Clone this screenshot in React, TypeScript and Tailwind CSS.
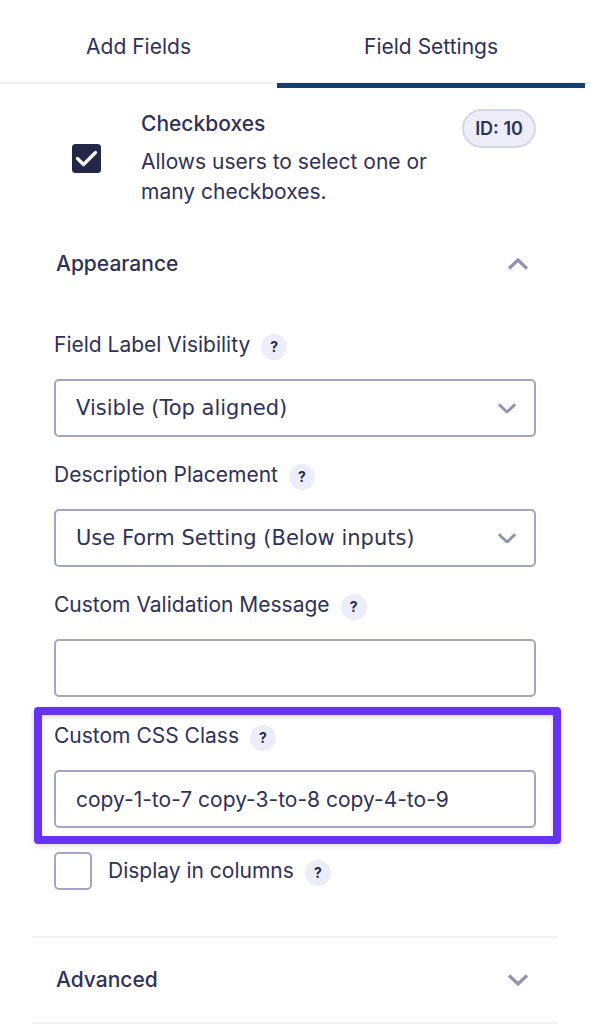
import type { ReactNode } from "react";

const HelpTip = ({ topic }: { topic: string }) => {
  return (
    <button
      type="button"
      aria-label={`Help: ${topic}`}
      className="mt-1 flex size-[26px] shrink-0 items-center justify-center rounded-full bg-[#ecedf8] text-sm font-bold text-[#242748]"
    >
      ?
    </button>
  );
};

const Chevron = ({ up = false, small = false }: { up?: boolean; small?: boolean }) => {
  return (
    <svg
      viewBox="0 0 20 12"
      className={`shrink-0 ${small ? "w-[18px]" : "w-5"} ${up ? "rotate-180" : ""}`}
      fill="none"
      stroke="#9092b2"
      strokeWidth="3.2"
      aria-hidden="true"
    >
      <path d="M1 1.5 L10 10 L19 1.5" />
    </svg>
  );
};

const Field = ({ id, label, children }: { id: string; label: string; children: ReactNode }) => {
  return (
    <div>
      <div className="mb-5 flex h-7 items-center gap-[11px]">
        <label htmlFor={id}>{label}</label>
        <HelpTip topic={label} />
      </div>
      {children}
    </div>
  );
};

const SelectField = ({ id, label, options }: { id: string; label: string; options: string[] }) => {
  return (
    <Field id={id} label={label}>
      <div className="grid items-center">
        <select
          id={id}
          className="col-start-1 row-start-1 h-[58px] w-full appearance-none rounded-[5px] border-2 border-[#a3a5c3] bg-white pr-12 pl-5 font-['DejaVu_Sans',sans-serif]"
        >
          {options.map((option) => (
            <option key={option}>{option}</option>
          ))}
        </select>
        <div className="pointer-events-none col-start-1 row-start-1 mr-5 justify-self-end">
          <Chevron small />
        </div>
      </div>
    </Field>
  );
};

const TextField = ({ id, label, value = "" }: { id: string; label: string; value?: string }) => {
  return (
    <Field id={id} label={label}>
      <input
        id={id}
        type="text"
        defaultValue={value}
        className="block h-[58px] w-full rounded-[5px] border-2 border-[#a3a5c3] bg-white px-5"
      />
    </Field>
  );
};

const SectionHeader = ({ title, open = false }: { title: string; open?: boolean }) => {
  return (
    <h2>
      <button
        type="button"
        aria-expanded={open}
        className="flex h-[84px] w-full items-center justify-between pr-[30px] pl-6 font-medium"
      >
        {title}
        <Chevron up={open} />
      </button>
    </h2>
  );
};

export default function App() {
  return (
    <main className="bg-white font-['Inter',sans-serif] text-[21px] leading-[30px] text-[#2f3158]">
      <div
        role="tablist"
        className="flex bg-[linear-gradient(#f1f1f6,#f1f1f6)] bg-[length:100%_2px] bg-[position:0_82px] bg-no-repeat pr-1.5"
      >
        <button
          type="button"
          role="tab"
          aria-selected="false"
          className="h-[88px] flex-[9] border-b-[5px] border-transparent pt-4 pb-1.5"
        >
          Add Fields
        </button>
        <button
          type="button"
          role="tab"
          aria-selected="true"
          className="h-[88px] flex-[10] border-b-[5px] border-[#113f70] pt-4 pb-1.5"
        >
          Field Settings
        </button>
      </div>

      <div className="pr-[33px] pl-8">
        <div className="flex items-start pt-[21px] pr-[22px] pl-10">
          <svg viewBox="0 0 29 29" className="mt-[35px] mr-10 size-[29px] shrink-0" aria-hidden="true">
            <rect width="29" height="29" rx="3.5" fill="#242748" />
            <path
              d="M5.5 14.5 L11.5 20.5 L23.5 8.5"
              fill="none"
              stroke="#fff"
              strokeWidth="3.2"
              strokeLinecap="round"
              strokeLinejoin="round"
            />
          </svg>
          <div className="flex-1">
            <h1 className="mb-2 font-medium">Checkboxes</h1>
            <p className="max-w-[310px]">Allows users to select one or many checkboxes.</p>
          </div>
          <span className="-ml-10 flex h-[39px] w-[74px] shrink-0 items-center justify-center rounded-full border-2 border-[#d5d7e9] bg-[#ecedf8] text-lg font-semibold">
            ID: 10
          </span>
        </div>

        <section className="pt-[15px]">
          <SectionHeader title="Appearance" open />
          <div className="flex flex-col gap-6 px-[22px] pt-[25px]">
            <SelectField
              id="label-visibility"
              label="Field Label Visibility"
              options={["Visible (Top aligned)", "Hidden"]}
            />
            <SelectField
              id="description-placement"
              label="Description Placement"
              options={["Use Form Setting (Below inputs)", "Above inputs"]}
            />
            <TextField id="validation-message" label="Custom Validation Message" />
          </div>

          <div className="mt-[10px] -mr-[3px] ml-[2px] rounded-[4px] border-8 border-[#6633f0] pt-[7px] pr-[17px] pb-2 pl-3 shadow-[0_2px_6px_rgba(0,0,0,0.15),inset_0_2px_5px_rgba(0,0,0,0.15)]">
            <TextField id="css-class" label="Custom CSS Class" value="copy-1-to-7 copy-3-to-8 copy-4-to-9" />
          </div>

          <div className="mt-2 mb-[46px] flex items-center px-[22px]">
            <input
              id="display-columns"
              type="checkbox"
              className="mr-4 size-[38px] appearance-none rounded-[5px] border-2 border-[#a3a5c3] bg-white checked:bg-[#242748]"
            />
            <label htmlFor="display-columns" className="mr-[11px]">
              Display in columns
            </label>
            <HelpTip topic="Display in columns" />
          </div>
        </section>

        <section className="border-y-2 border-[#f1f1f6]">
          <SectionHeader title="Advanced" />
        </section>
      </div>
    </main>
  );
}
